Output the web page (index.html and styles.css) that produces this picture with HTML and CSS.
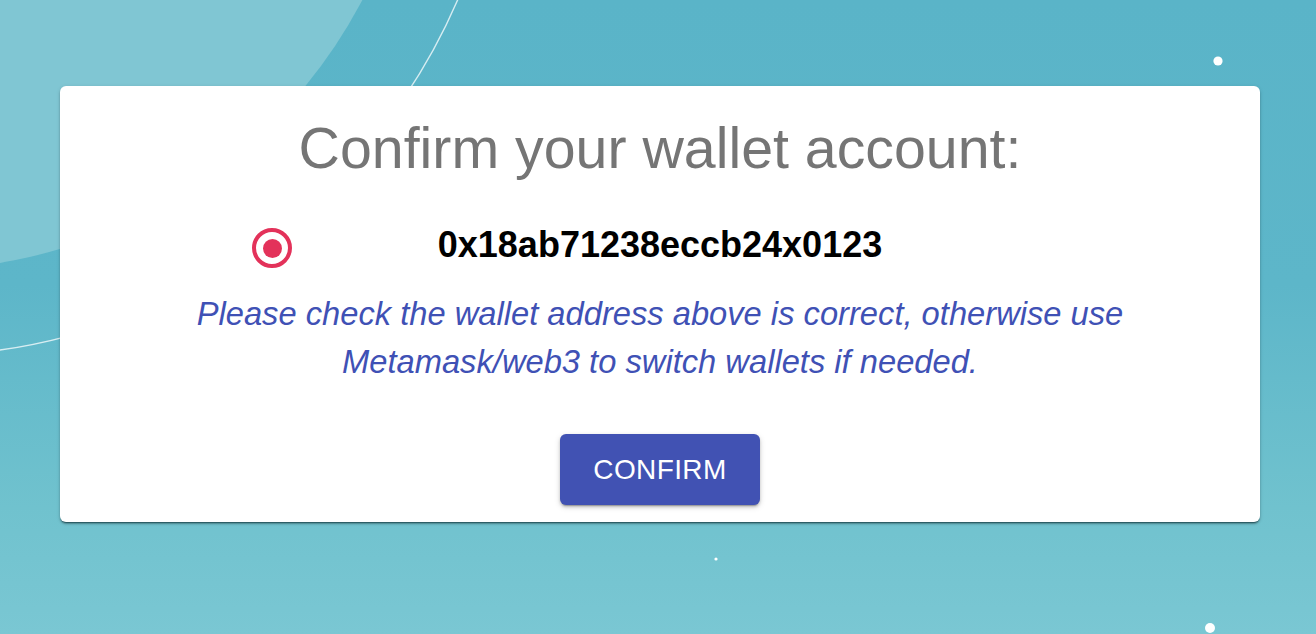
FILE: index.html
```html
<!DOCTYPE html>
<html lang="en">
<head>
<meta charset="utf-8">
<title>Confirm your wallet account</title>
<link rel="stylesheet" href="styles.css">
</head>
<body>
<div class="page">
  <svg class="backdrop" width="1316" height="634" viewBox="0 0 1316 634" aria-hidden="true">
    <circle cx="-84" cy="-234" r="504" fill="#80c6d3"/>
    <circle cx="-84" cy="-234" r="590" fill="none" stroke="#ffffff" stroke-opacity="0.75" stroke-width="1.4"/>
    <circle cx="1218" cy="61" r="4.6" fill="#ffffff"/>
    <circle cx="716" cy="559" r="1.6" fill="#ffffff"/>
    <circle cx="1210" cy="628" r="5" fill="#ffffff"/>
  </svg>
  <main class="card">
    <h1 class="title">Confirm your wallet account:</h1>
    <div class="account-row">
      <span class="radio"><span class="radio-dot"></span></span>
      <span class="address">0x18ab71238eccb24x0123</span>
    </div>
    <p class="note">Please check the wallet address above is correct, otherwise use Metamask/web3 to switch wallets if needed.</p>
    <button class="confirm" type="button">CONFIRM</button>
  </main>
</div>
</body>
</html>
```

FILE: styles.css
```css
html, body {
  margin: 0;
  padding: 0;
}

body {
  font-family: "Liberation Sans", Arial, sans-serif;
  overflow: hidden;
}

.page {
  position: relative;
  width: 1316px;
  height: 634px;
  overflow: hidden;
  background: linear-gradient(180deg, #5ab4c8 0%, #5db6c9 45%, #70c2ce 80%, #7ac7d3 100%);
  display: flex;
  flex-direction: column;
  align-items: flex-start;
}

.backdrop {
  position: absolute;
  left: 0;
  top: 0;
}

.card {
  position: relative;
  margin-top: 86px;
  margin-left: 60px;
  width: 1200px;
  height: 436px;
  box-sizing: border-box;
  background: #ffffff;
  border-radius: 6px;
  box-shadow: 0 2px 1px -1px rgba(0, 40, 50, 0.5), 0 2px 2px 0 rgba(0, 0, 0, 0.25), 0 1px 4px 0 rgba(0, 0, 0, 0.12);
  padding-top: 29px;
  display: flex;
  flex-direction: column;
  align-items: center;
}

.title {
  margin: 0;
  font-size: 57.3px;
  line-height: 66px;
  font-weight: 400;
  color: #757575;
}

.account-row {
  margin-top: 44px;
  width: 100%;
  display: grid;
  grid-template-columns: 1fr auto 1fr;
  align-items: start;
}

.radio {
  justify-self: start;
  margin-left: 192px;
  margin-top: 3px;
  width: 40px;
  height: 40px;
  box-sizing: border-box;
  border: 4px solid #e3325a;
  border-radius: 50%;
  display: flex;
  align-items: center;
  justify-content: center;
}

.radio-dot {
  width: 19px;
  height: 19px;
  border-radius: 50%;
  background: #e3325a;
}

.address {
  font-size: 36px;
  line-height: 40px;
  font-weight: 700;
  color: #000000;
}

.note {
  margin: 22px 0 0;
  width: 960px;
  text-align: center;
  font-size: 32.7px;
  line-height: 48px;
  font-style: italic;
  color: #3f51b5;
}

.confirm {
  margin-top: 48px;
  width: 200px;
  height: 71px;
  border: none;
  border-radius: 6px;
  background: #4152b3;
  color: #ffffff;
  font-family: "Liberation Sans", Arial, sans-serif;
  font-size: 28px;
  letter-spacing: 0.4px;
  box-shadow: 0 3px 1px -2px rgba(0, 0, 0, 0.2), 0 2px 3px 0 rgba(0, 0, 0, 0.18), 0 2px 6px 0 rgba(0, 0, 0, 0.14);
  cursor: pointer;
}
```
